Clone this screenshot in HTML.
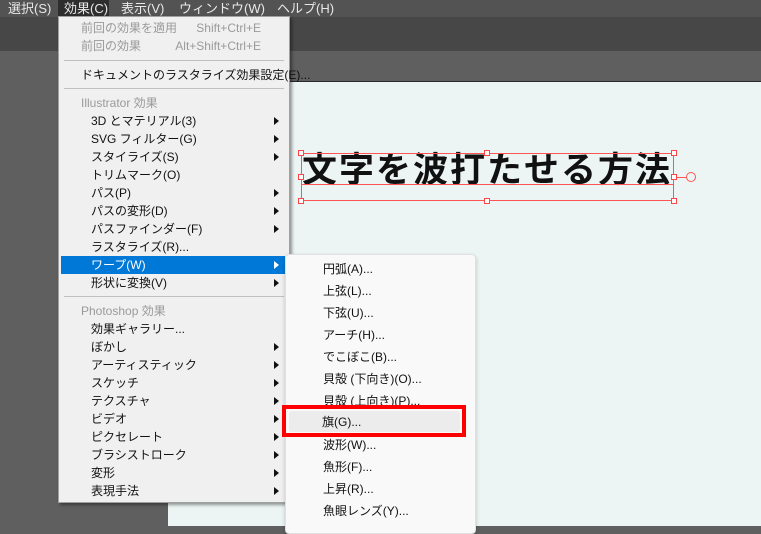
<!DOCTYPE html>
<html><head><meta charset="utf-8"><style>
*{margin:0;padding:0;box-sizing:border-box}
body{width:761px;height:526px;overflow:hidden;background:#5f5f5f;font-family:"Liberation Sans","Noto Sans CJK JP",sans-serif;position:relative}
.bar{position:absolute;left:0;top:0;width:761px;height:17px;background:#535353}
.bar span{position:absolute;top:-2px;color:#e8e8e8;font-size:13px;white-space:nowrap}
.tb{position:absolute;left:0;top:17px;width:761px;height:34px;background:#474747}
.art{position:absolute;left:168px;top:81px;width:593px;height:445px;background:#ecf5f3;border-top:1px solid #2a2a2a}
.menu{position:absolute;left:58px;top:16px;width:232px;height:487px;background:#f0f0f0;border:1px solid #a0a0a0;box-shadow:2px 2px 3px rgba(0,0,0,.4)}
.it{position:absolute;left:2px;width:224px;height:18px;font-size:12px;line-height:18px;color:#111;padding-left:30px;white-space:nowrap}
.it.g{color:#9a9a9a;padding-left:20px}
.it.sub:after{content:"";position:absolute;right:6px;top:5px;border-left:5px solid #111;border-top:4px solid transparent;border-bottom:4px solid transparent}
.it.hl{background:#0078d7;color:#fff}
.it.hl:after{border-left-color:#fff}
.sep{position:absolute;left:5px;width:220px;height:1px;background:#c0c0c0}
.sc{position:absolute;right:24px;color:#9a9a9a}
.sm{position:absolute;left:285px;top:254px;width:191px;height:280px;background:#f9f9f9;border:1px solid #e0e0e0;border-radius:4px;box-shadow:0 2px 4px rgba(0,0,0,.2)}
.si{position:absolute;left:37px;font-size:12px;color:#111;white-space:nowrap;line-height:16px}
.red{position:absolute;left:282px;top:405px;width:184px;height:32px;border:4px solid #f00}
.hv{position:absolute;left:289px;top:411px;width:171px;height:21px;background:#ececec;border-radius:3px}
.hd{position:absolute;width:6px;height:6px;border:1px solid #f44;background:#fff}
</style></head><body>
<div class="tb"></div>
<div class="bar">
<span style="left:8px">選択(S)</span>
<span style="left:58px;top:0;width:51px;height:17px;background:#2e2e2e"></span>
<span style="left:64px">効果(C)</span>
<span style="left:121px">表示(V)</span>
<span style="left:179px">ウィンドウ(W)</span>
<span style="left:277px">ヘルプ(H)</span>
</div>
<div class="art"></div>
<div style="position:absolute;left:302px;top:150px;font-size:35px;font-weight:bold;color:#111;letter-spacing:2px;line-height:42px;white-space:nowrap">文字を波打たせる方法</div>
<div style="position:absolute;left:301px;top:153px;width:373px;height:48px;border:1px solid #f55"></div>
<div style="position:absolute;left:301px;top:184px;width:373px;height:1px;background:#f55"></div>
<div style="position:absolute;left:674px;top:177px;width:12px;height:1px;background:#f55"></div>
<div style="position:absolute;left:686px;top:172px;width:10px;height:10px;border:1px solid #f55;border-radius:50%"></div>
<div class="hd" style="left:298px;top:150px"></div><div class="hd" style="left:484px;top:150px"></div><div class="hd" style="left:671px;top:150px"></div>
<div class="hd" style="left:298px;top:174px"></div><div class="hd" style="left:671px;top:174px"></div>
<div class="hd" style="left:298px;top:198px"></div><div class="hd" style="left:484px;top:198px"></div><div class="hd" style="left:671px;top:198px"></div>

<div class="menu">
<div class="it g" style="top:2px">前回の効果を適用<span class="sc">Shift+Ctrl+E</span></div>
<div class="it g" style="top:20px">前回の効果<span class="sc">Alt+Shift+Ctrl+E</span></div>
<div class="sep" style="top:43px"></div>
<div class="it" style="top:49px;padding-left:20px">ドキュメントのラスタライズ効果設定(E)...</div>
<div class="sep" style="top:71px"></div>
<div class="it g" style="top:77px">Illustrator 効果</div>
<div class="it sub" style="top:95px">3D とマテリアル(3)</div>
<div class="it sub" style="top:113px">SVG フィルター(G)</div>
<div class="it sub" style="top:131px">スタイライズ(S)</div>
<div class="it" style="top:149px">トリムマーク(O)</div>
<div class="it sub" style="top:167px">パス(P)</div>
<div class="it sub" style="top:185px">パスの変形(D)</div>
<div class="it sub" style="top:203px">パスファインダー(F)</div>
<div class="it" style="top:221px">ラスタライズ(R)...</div>
<div class="it sub hl" style="top:239px">ワープ(W)</div>
<div class="it sub" style="top:257px">形状に変換(V)</div>
<div class="sep" style="top:279px"></div>
<div class="it g" style="top:285px">Photoshop 効果</div>
<div class="it" style="top:303px">効果ギャラリー...</div>
<div class="it sub" style="top:321px">ぼかし</div>
<div class="it sub" style="top:339px">アーティスティック</div>
<div class="it sub" style="top:357px">スケッチ</div>
<div class="it sub" style="top:375px">テクスチャ</div>
<div class="it sub" style="top:393px">ビデオ</div>
<div class="it sub" style="top:411px">ピクセレート</div>
<div class="it sub" style="top:429px">ブラシストローク</div>
<div class="it sub" style="top:447px">変形</div>
<div class="it sub" style="top:465px">表現手法</div>
</div>

<div class="sm">
<div class="si" style="top:6px">円弧(A)...</div>
<div class="si" style="top:28px">上弦(L)...</div>
<div class="si" style="top:50px">下弦(U)...</div>
<div class="si" style="top:72px">アーチ(H)...</div>
<div class="si" style="top:94px">でこぼこ(B)...</div>
<div class="si" style="top:116px">貝殻 (下向き)(O)...</div>
<div class="si" style="top:138px">貝殻 (上向き)(P)...</div>
<div class="si" style="top:182px">波形(W)...</div>
<div class="si" style="top:204px">魚形(F)...</div>
<div class="si" style="top:226px">上昇(R)...</div>
<div class="si" style="top:248px">魚眼レンズ(Y)...</div>
</div>
<div class="hv"></div>
<div class="si" style="left:322px;top:414px;position:absolute">旗(G)...</div>
<div class="red"></div>
</body></html>
